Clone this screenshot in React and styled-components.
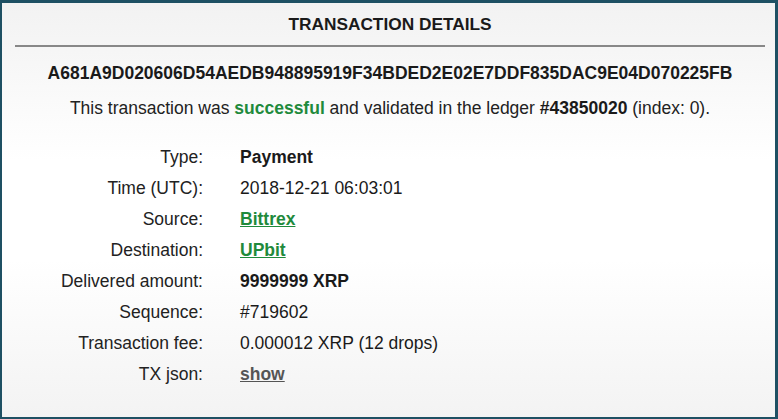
import React from "react";
import styled, { createGlobalStyle } from "styled-components";

const Global = createGlobalStyle`
  html, body { margin: 0; padding: 0; }
  body { font-family: "Liberation Sans", Arial, sans-serif; background: #1e5063; }
`;

const Frame = styled.div`
  width: 778px;
  height: 419px;
  box-sizing: border-box;
  border-style: solid;
  border-color: #1e5063;
  border-width: 3px 3px 2px 2px;
  background: linear-gradient(to bottom, #f2f2f2 0%, #ffffff 38%, #ffffff 62%, #f3f3f3 100%);
  color: #222;
  padding: 0 10px 0 13px;
`;

const Title = styled.h1`
  margin: 0;
  padding: 11px 0;
  line-height: 20px;
  font-size: 17.3px;
  font-weight: bold;
  text-align: center;
  border-bottom: 2px solid #888;
  color: #1a1a1a;
`;

const Hash = styled.div`
  margin-top: 16px;
  line-height: 20px;
  font-size: 17.5px;
  font-weight: bold;
  text-align: center;
  color: #1a1a1a;
`;

const Summary = styled.p`
  margin: 15px 0 0;
  line-height: 20px;
  font-size: 17.5px;
  text-align: center;
`;

const Strong = styled.b`
  font-weight: bold;
  color: ${(p) => (p.$green ? "#1f8a3c" : "#1a1a1a")};
`;

const Table = styled.div`
  margin-top: 29px;
  display: grid;
  grid-template-columns: 188px auto;
  column-gap: 37px;
  row-gap: 11px;
  font-size: 17.5px;
  line-height: 20px;
`;

const Label = styled.div`
  text-align: right;
`;

const Value = styled.div`
  font-weight: ${(p) => (p.$bold ? "bold" : "normal")};
  color: #1a1a1a;
`;

const Link = styled.a`
  font-weight: bold;
  text-decoration: underline;
  color: ${(p) => (p.$gray ? "#555" : "#1f8a3c")};
  cursor: pointer;
`;

const rows = [
  ["Type:", <Value $bold>Payment</Value>],
  ["Time (UTC):", <Value>2018-12-21 06:03:01</Value>],
  ["Source:", <Value><Link>Bittrex</Link></Value>],
  ["Destination:", <Value><Link>UPbit</Link></Value>],
  ["Delivered amount:", <Value $bold>9999999 XRP</Value>],
  ["Sequence:", <Value>#719602</Value>],
  ["Transaction fee:", <Value>0.000012 XRP (12 drops)</Value>],
  ["TX json:", <Value><Link $gray>show</Link></Value>],
];

export default function App() {
  return (
    <>
      <Global />
      <Frame>
        <Title>TRANSACTION DETAILS</Title>
        <Hash>A681A9D020606D54AEDB948895919F34BDED2E02E7DDF835DAC9E04D070225FB</Hash>
        <Summary>
          This transaction was <Strong $green>successful</Strong> and validated in the ledger{" "}
          <Strong>#43850020</Strong> (index: 0).
        </Summary>
        <Table>
          {rows.map(([l, v]) => (
            <React.Fragment key={l}>
              <Label>{l}</Label>
              {v}
            </React.Fragment>
          ))}
        </Table>
      </Frame>
    </>
  );
}
